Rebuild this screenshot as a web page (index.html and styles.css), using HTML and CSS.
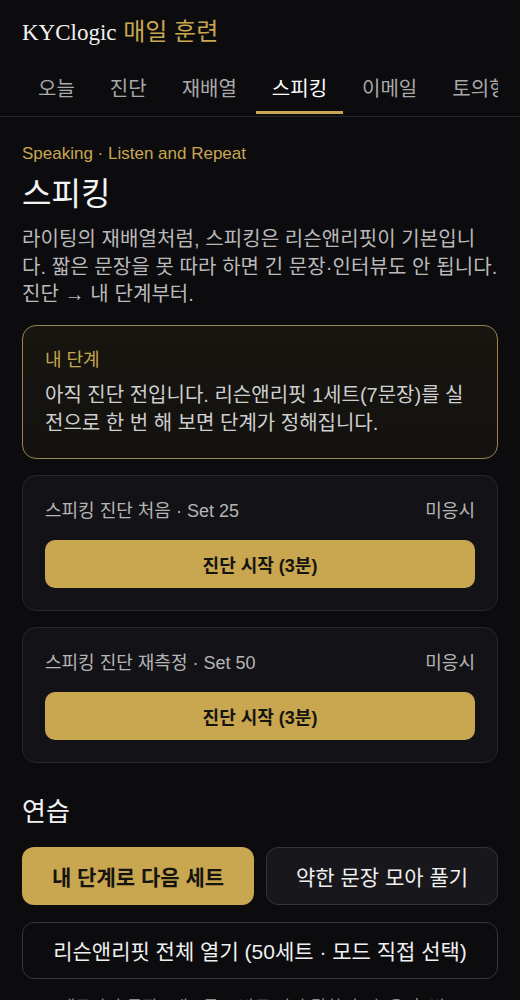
FILE: index.html
```html
<!DOCTYPE html>
<html lang="ko">
<head>
<meta charset="utf-8">
<title>KYClogic 매일 훈련 - 스피킹</title>
<link rel="stylesheet" href="styles.css">
</head>
<body>
<header class="top">
  <h1 class="brand"><span class="brand-main">KYClogic</span> <span class="brand-sub">매일 훈련</span></h1>
  <div class="nav-wrap">
    <nav class="nav">
      <a class="tab">오늘</a>
      <a class="tab">진단</a>
      <a class="tab">재배열</a>
      <a class="tab active">스피킹</a>
      <a class="tab">이메일</a>
      <a class="tab">토의형</a>
      <a class="tab">기록</a>
    </nav>
  </div>
</header>
<main class="content">
  <p class="eyebrow">Speaking · Listen and Repeat</p>
  <h2 class="title">스피킹</h2>
  <p class="lead">라이팅의 재배열처럼, 스피킹은 리슨앤리핏이 기본입니다. 짧은 문장을 못 따라 하면 긴 문장·인터뷰도 안 됩니다. 진단 → 내 단계부터.</p>

  <section class="level-card">
    <div class="level-label">내 단계</div>
    <p class="level-text">아직 진단 전입니다. 리슨앤리핏 1세트(7문장)를 실전으로 한 번 해 보면 단계가 정해집니다.</p>
  </section>

  <section class="card">
    <div class="card-row">
      <span class="card-name">스피킹 진단 처음 · Set 25</span>
      <span class="card-status">미응시</span>
    </div>
    <button class="btn btn-gold btn-wide">진단 시작 (3분)</button>
  </section>

  <section class="card">
    <div class="card-row">
      <span class="card-name">스피킹 진단 재측정 · Set 50</span>
      <span class="card-status">미응시</span>
    </div>
    <button class="btn btn-gold btn-wide">진단 시작 (3분)</button>
  </section>

  <h3 class="section-title">연습</h3>
  <div class="btn-grid">
    <button class="btn btn-gold btn-big">내 단계로 다음 세트</button>
    <button class="btn btn-dark btn-big">약한 문장 모아 풀기</button>
  </div>
  <button class="btn btn-outline btn-big btn-full">리슨앤리핏 전체 열기 (50세트 · 모드 직접 선택)</button>
  <p class="note">세트마다 문장 7개 · 듣고 바로 따라 말하기 · 녹음 후 비교</p>
</main>
</body>
</html>
```

FILE: styles.css
```css
* {
  box-sizing: border-box;
}

html, body {
  margin: 0;
  padding: 0;
  background: #0c0c0f;
}

body {
  font-family: "Liberation Sans", "Noto Sans CJK KR", sans-serif;
  color: #e8e8e8;
  width: 520px;
}

.top {
  padding-top: 16px;
}

.brand {
  margin: 0;
  padding: 0 22px;
  font-weight: 400;
  font-size: 24px;
  line-height: 28px;
  color: #f2f2f2;
}

.brand-main {
  font-family: "Liberation Serif", serif;
  font-size: 23px;
}

.brand-sub {
  font-family: "Noto Sans CJK KR", sans-serif;
  font-size: 24px;
  color: #c9a650;
}

.nav-wrap {
  margin-top: 20px;
  border-bottom: 1px solid #26262a;
  padding-bottom: 2px;
}

.nav {
  margin: 0 22px;
  display: flex;
  gap: 3px;
  overflow: hidden;
  white-space: nowrap;
}

.tab {
  flex: none;
  padding: 10px 16px 10px;
  font-size: 20px;
  line-height: 24px;
  color: #a9a9a9;
  border-bottom: 3px solid transparent;
}

.tab.active {
  color: #ffffff;
  border-bottom-color: #c9a650;
}

.content {
  padding: 26px 22px 20px;
}

.eyebrow {
  margin: 0;
  font-size: 17px;
  line-height: 22px;
  color: #c9a650;
}

.title {
  margin: 10px 0 0;
  font-size: 32px;
  line-height: 38px;
  font-weight: 400;
  color: #f4f4f4;
}

.lead {
  margin: 13px 0 0;
  font-size: 20px;
  line-height: 27.5px;
  color: #bababa;
  letter-spacing: 0.08px;
}

.level-card {
  margin-top: 16px;
  border: 1px solid #9a8450;
  border-radius: 14px;
  background: linear-gradient(180deg, #17150f 0%, #131210 100%);
  padding: 23px 22px 21px;
}

.level-label {
  font-size: 18px;
  line-height: 22px;
  color: #c9a650;
}

.level-text {
  margin: 10px 0 0;
  font-size: 20px;
  line-height: 28px;
  color: #cfcfcf;
}

.card {
  margin-top: 16px;
  background: #131317;
  border: 1px solid #27272c;
  border-radius: 14px;
  padding: 23px 22px 22px;
}

.card-row {
  display: flex;
  justify-content: space-between;
  align-items: center;
  font-size: 18px;
  line-height: 24px;
  color: #b5b5b5;
}

.btn {
  font-family: inherit;
  border: none;
  cursor: pointer;
  display: block;
}

.btn-wide {
  width: 100%;
  margin-top: 17px;
  height: 48px;
  border-radius: 10px;
  font-size: 18px;
  font-weight: 700;
}

.btn-gold {
  background: #c9a650;
  color: #16140f;
}

.section-title {
  margin: 33px 0 0;
  font-size: 26px;
  line-height: 32px;
  font-weight: 400;
  color: #f2f2f2;
}

.btn-grid {
  margin-top: 19px;
  display: grid;
  grid-template-columns: 1fr 1fr;
  gap: 12px;
}

.btn-big {
  height: 58px;
  border-radius: 12px;
  font-size: 21px;
}

.btn-gold.btn-big {
  font-weight: 700;
}

.btn-dark {
  background: #18181c;
  color: #f0f0f0;
  border: 1px solid #34343a;
}

.btn-outline {
  background: transparent;
  color: #f0f0f0;
  border: 1px solid #34343a;
}

.btn-full {
  width: 100%;
  margin-top: 17px;
  height: 57px;
}

.note {
  margin: 18px 0 0;
  text-align: center;
  font-size: 17px;
  line-height: 22px;
  color: #8a8a8a;
}
```
